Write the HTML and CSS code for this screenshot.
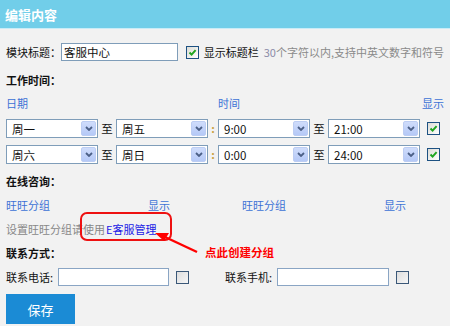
FILE: index.html
```html
<!DOCTYPE html>
<html>
<head>
<meta charset="utf-8">
<link rel="stylesheet" href="styles.css">
</head>
<body>
<div class="panel">
  <div class="hd">编辑内容</div>
  <div class="bd">
    <div class="row r-title">
      <span class="lbl">模块标题：</span>
      <span class="inp inp-title">客服中心</span>
      <span class="cb on"><svg width="11" height="11" viewBox="0 0 11 11"><path d="M2.5 5.5 L4.6 7.6 L8.6 3.2" fill="none" stroke="#1fa51f" stroke-width="2"/></svg></span>
      <span class="cb-lbl">显示标题栏</span>
      <span class="hint"><span class="num">30</span>个字符以内,支持中英文数字和符号</span>
    </div>
    <div class="row r-work"><span class="sec">工作时间：</span></div>
    <div class="row r-cols">
      <span class="c-date">日期</span>
      <span class="c-time">时间</span>
      <span class="c-show">显示</span>
    </div>
    <div class="row r-sel">
      <span class="sel"><span class="sel-v">周一</span><span class="sel-btn"><svg width="8" height="5" viewBox="0 0 8 5"><path d="M1 1 L4 4 L7 1" fill="none" stroke="#4b5f86" stroke-width="1.8"/></svg></span></span>
      <span class="sep">至</span>
      <span class="sel"><span class="sel-v">周五</span><span class="sel-btn"><svg width="8" height="5" viewBox="0 0 8 5"><path d="M1 1 L4 4 L7 1" fill="none" stroke="#4b5f86" stroke-width="1.8"/></svg></span></span>
      <span class="colon">:</span>
      <span class="sel"><span class="sel-v">9:00</span><span class="sel-btn"><svg width="8" height="5" viewBox="0 0 8 5"><path d="M1 1 L4 4 L7 1" fill="none" stroke="#4b5f86" stroke-width="1.8"/></svg></span></span>
      <span class="sep">至</span>
      <span class="sel"><span class="sel-v">21:00</span><span class="sel-btn"><svg width="8" height="5" viewBox="0 0 8 5"><path d="M1 1 L4 4 L7 1" fill="none" stroke="#4b5f86" stroke-width="1.8"/></svg></span></span>
      <span class="cb on cb-sel"><svg width="11" height="11" viewBox="0 0 11 11"><path d="M2.5 5.5 L4.6 7.6 L8.6 3.2" fill="none" stroke="#1fa51f" stroke-width="2"/></svg></span>
    </div>
    <div class="row r-sel">
      <span class="sel"><span class="sel-v">周六</span><span class="sel-btn"><svg width="8" height="5" viewBox="0 0 8 5"><path d="M1 1 L4 4 L7 1" fill="none" stroke="#4b5f86" stroke-width="1.8"/></svg></span></span>
      <span class="sep">至</span>
      <span class="sel"><span class="sel-v">周日</span><span class="sel-btn"><svg width="8" height="5" viewBox="0 0 8 5"><path d="M1 1 L4 4 L7 1" fill="none" stroke="#4b5f86" stroke-width="1.8"/></svg></span></span>
      <span class="colon">:</span>
      <span class="sel"><span class="sel-v">0:00</span><span class="sel-btn"><svg width="8" height="5" viewBox="0 0 8 5"><path d="M1 1 L4 4 L7 1" fill="none" stroke="#4b5f86" stroke-width="1.8"/></svg></span></span>
      <span class="sep">至</span>
      <span class="sel"><span class="sel-v">24:00</span><span class="sel-btn"><svg width="8" height="5" viewBox="0 0 8 5"><path d="M1 1 L4 4 L7 1" fill="none" stroke="#4b5f86" stroke-width="1.8"/></svg></span></span>
      <span class="cb on cb-sel"><svg width="11" height="11" viewBox="0 0 11 11"><path d="M2.5 5.5 L4.6 7.6 L8.6 3.2" fill="none" stroke="#1fa51f" stroke-width="2"/></svg></span>
    </div>
    <div class="row r-online"><span class="sec">在线咨询：</span></div>
    <div class="row r-ww">
      <span class="c1">旺旺分组</span>
      <span class="c2">显示</span>
      <span class="c3">旺旺分组</span>
      <span class="c4">显示</span>
    </div>
    <div class="row r-tip">
      <span class="tip">设置旺旺分组请使用</span><a class="ecs">E客服管理</a>
    </div>
    <div class="row r-contact"><span class="sec">联系方式：</span></div>
    <div class="row r-phone">
      <span class="half">
        <span class="plbl">联系电话:</span>
        <span class="inp inp-phone"></span>
        <span class="cb off"></span>
      </span>
      <span class="half">
        <span class="plbl">联系手机:</span>
        <span class="inp inp-mobile"></span>
        <span class="cb off"></span>
      </span>
    </div>
    <div class="r-btn"><span class="btn">保存</span></div>
  </div>

  <div class="note-box"></div>
  <svg class="note-arrow" width="50" height="26" viewBox="0 0 50 26">
    <path d="M45 23 L13 8" stroke="#ff0000" stroke-width="2.4" fill="none"/>
    <path d="M3 4 L17 4 L12 12 Z" fill="#ff0000"/>
  </svg>
  <span class="note-text">点此创建分组</span>
</div>
</body>
</html>
```

FILE: styles.css
```css
* { box-sizing: border-box; }
html, body { margin: 0; padding: 0; }
body {
  width: 450px;
  height: 326px;
  overflow: hidden;
  background: #f2f2f2;
  font-family: "Noto Sans CJK SC", "Noto Sans", sans-serif;
  font-size: 11px;
  color: #111;
}
.panel { position: relative; width: 450px; height: 326px; }
.hd {
  height: 29px;
  line-height: 29px;
  padding-left: 5px;
  background: #71cee9;
  border-bottom: 1px solid #c9ecf7;
  color: #fff;
  font-size: 13px;
  font-weight: bold;
}
.bd { padding: 11px 6px 0 6px; }
.row { display: flex; align-items: center; height: 24px; white-space: nowrap; }

.r-title { height: 24px; }
.lbl { width: 55px; }
.inp {
  display: flex;
  align-items: center;
  background: #fff;
  border: 1px solid #8aa5c4;
}
.inp-title {
  width: 122px;
  height: 21px;
  padding-left: 2px;
  font-size: 11.5px;
  border-color: #7f9db9;
}
.cb {
  width: 13px;
  height: 13px;
  flex: none;
  border: 1px solid #1d5182;
  background: linear-gradient(135deg, #dcdcd6, #ffffff);
  display: flex;
  align-items: center;
  justify-content: center;
}
.r-title .cb { margin-left: 8px; }
.cb-lbl { margin-left: 5px; }
.hint { margin-left: 5px; color: #8a8a8a; }
.num { color: #8c8ca8; }

.r-work { margin-top: 4px; height: 23px; }
.sec { font-weight: bold; }
.r-cols { color: #3d72d6; }
.c-date { width: 212px; }
.c-time { flex: 1; }
.c-show { margin-right: 0; }

.r-sel { height: 26px; }
.sel {
  width: 92px;
  height: 19px;
  flex: none;
  display: flex;
  align-items: stretch;
  justify-content: space-between;
  background: #fff;
  border: 1px solid #7f9db9;
  padding: 1px;
}
.sel-v { padding-left: 4px; line-height: 17px; font-size: 11.5px; }
.sel-btn {
  width: 15px;
  display: flex;
  align-items: center;
  justify-content: center;
  background: linear-gradient(#cfdcfb, #b5c9f7);
  border: 1px solid #bccdf3;
  border-radius: 2px;
}
.sep { width: 18px; text-align: center; flex: none; font-size: 11.5px; }
.colon { width: 10px; text-align: center; flex: none; color: #c9a040; font-weight: bold; }
.cb-sel { margin-left: 7px; }

.r-online { margin-top: 2px; }
.r-ww { color: #3d72d6; }
.c1 { width: 142px; }
.c2 { width: 94px; }
.c3 { width: 142px; }

.tip { color: #888; }
.ecs { color: #2020e6; margin-left: 1px; }

.half { display: flex; align-items: center; width: 236px; }
.plbl { width: 52px; }
.inp { height: 18px; }
.inp-phone { width: 111px; }
.inp-mobile { width: 112px; }
.half .cb { margin-left: 7px; border-color: #3b5878; background: linear-gradient(135deg, #dedede, #f6f6f6); }

.r-btn { margin-top: 5px; }
.btn {
  display: flex;
  align-items: center;
  justify-content: center;
  width: 69px;
  height: 30px;
  background: #1b8bd5;
  color: #fff;
  font-size: 13px;
}

.note-box {
  position: absolute;
  left: 80px;
  top: 212px;
  width: 92px;
  height: 29px;
  border: 2px solid #ee1111;
  border-radius: 7px;
}
.note-arrow { position: absolute; left: 152px; top: 229px; }
.note-text {
  position: absolute;
  left: 205px;
  top: 244px;
  color: #ff0000;
  font-weight: bold;
  font-size: 11.5px;
  line-height: 17px;
}
```
